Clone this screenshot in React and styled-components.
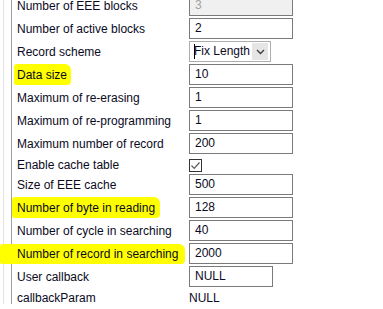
import React from "react";
import styled, { createGlobalStyle } from "styled-components";

const GlobalStyle = createGlobalStyle`
  html, body {
    margin: 0;
    padding: 0;
    background: #ffffff;
    overflow: hidden;
  }
  body {
    font-family: "Segoe UI", "Liberation Sans", Arial, sans-serif;
    font-size: 12px;
    color: #000;
  }
`;

const rows = [
  { label: "Number of EEE blocks", type: "input", value: "3", disabled: true },
  { label: "Number of active blocks", type: "input", value: "2" },
  { label: "Record scheme", type: "select", value: "Fix Length" },
  { label: "Data size", type: "input", value: "10", hl: [-3, -4, -4, -3] },
  { label: "Maximum of re-erasing", type: "input", value: "1" },
  { label: "Maximum of re-programming", type: "input", value: "1" },
  { label: "Maximum number of record", type: "input", value: "200" },
  { label: "Enable cache table", type: "check" },
  { label: "Size of EEE cache", type: "input", value: "500" },
  { label: "Number of byte in reading", type: "input", value: "128", hl: [-5, -5, -4, -3] },
  { label: "Number of cycle in searching", type: "input", value: "40" },
  { label: "Number of record in searching", type: "input", value: "2000", hl: [-17, -7, -3, -3] },
  { label: "User callback", type: "input", value: "NULL", short: true },
  { label: "callbackParam", type: "text", value: "NULL" },
];

function Value({ row }) {
  if (row.type === "select") {
    return (
      <Select>
        <Caret />
        <span>{row.value}</span>
        <DropButton>
          <svg width="9" height="6" viewBox="0 0 9 6">
            <path d="M1 1 L4.5 4.5 L8 1" fill="none" stroke="#404040" strokeWidth="1.4" />
          </svg>
        </DropButton>
      </Select>
    );
  }
  if (row.type === "check") {
    return (
      <Check>
        <svg width="11" height="11" viewBox="0 0 11 11">
          <path d="M1.5 5.5 L4.2 8.3 L9.5 2.5" fill="none" stroke="#5a5a5a" strokeWidth="1.2" />
        </svg>
      </Check>
    );
  }
  if (row.type === "text") {
    return <PlainValue>{row.value}</PlainValue>;
  }
  return (
    <Field $disabled={row.disabled} $short={row.short}>
      {row.value}
    </Field>
  );
}

export default function App() {
  return (
    <>
      <GlobalStyle />
      <Outer>
        <Inner>
          <Grid>
            {rows.map((row) => (
              <Row key={row.label} $compact={row.type === "check" || row.type === "text"}>
                <Label>
                  <LabelText $hl={row.hl}>{row.label}</LabelText>
                </Label>
                <Value row={row} />
              </Row>
            ))}
          </Grid>
        </Inner>
      </Outer>
    </>
  );
}

const Outer = styled.div`
  margin-left: 3px;
  border-left: 1px solid #e3e3e3;
  height: 309px;
`;

const Inner = styled.div`
  margin-left: 7px;
  border-left: 1px solid #a0a0a0;
  height: 100%;
`;

const Grid = styled.div`
  display: flex;
  flex-direction: column;
  margin-top: -5px;
`;

const Row = styled.div`
  display: grid;
  grid-template-columns: 177px 1fr;
  align-items: center;
  height: ${(p) => (p.$compact ? "16px" : "21px")};
  padding: ${(p) => (p.$compact ? "1px 0" : "0 0 2px")};
`;

const Label = styled.div`
  padding-left: 5px;
  white-space: nowrap;
  color: #0a0a1e;
  line-height: 16px;
`;

const LabelText = styled.span`
  position: relative;
  z-index: 0;

  &::before {
    content: "";
    display: ${(p) => (p.$hl ? "block" : "none")};
    position: absolute;
    z-index: -1;
    background: #ffff00;
    border-radius: 3px 6px 4px 2px;
    left: ${(p) => (p.$hl ? p.$hl[0] : 0)}px;
    right: ${(p) => (p.$hl ? p.$hl[1] : 0)}px;
    top: ${(p) => (p.$hl ? p.$hl[2] : 0)}px;
    bottom: ${(p) => (p.$hl ? p.$hl[3] : 0)}px;
  }
`;

const Field = styled.div`
  box-sizing: border-box;
  width: ${(p) => (p.$short ? "84px" : "104px")};
  height: 21px;
  border: 1px solid #7a7a7a;
  background: ${(p) => (p.$disabled ? "#f0f0f0" : "#ffffff")};
  color: ${(p) => (p.$disabled ? "#a0a0a0" : "#0a0a1e")};
  padding-left: 5px;
  line-height: 19px;
`;

const Select = styled.div`
  box-sizing: border-box;
  width: 82px;
  height: 21px;
  border: 1px solid #adadad;
  background: #ffffff;
  display: flex;
  align-items: center;
  padding-left: 4px;
  color: #0a0a1e;

  span {
    flex: 1;
    line-height: 19px;
  }
`;

const Caret = styled.i`
  width: 1px;
  height: 15px;
  background: #000;
  margin-right: -1px;
`;

const DropButton = styled.div`
  width: 16px;
  height: 17px;
  margin-right: 2px;
  background: #e5e5e5;
  display: flex;
  align-items: center;
  justify-content: center;
`;

const Check = styled.div`
  box-sizing: border-box;
  width: 13px;
  height: 13px;
  border: 1px solid #333333;
  background: #fff;
  display: flex;
  align-items: center;
  justify-content: center;
`;

const PlainValue = styled.div`
  color: #0a0a1e;
  line-height: 16px;
`;
